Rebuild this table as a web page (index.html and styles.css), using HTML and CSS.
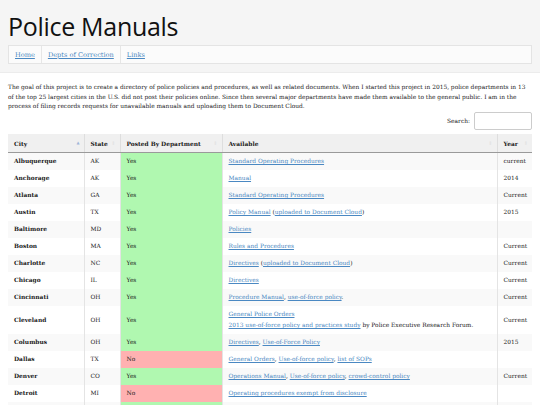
FILE: index.html
```html
<!DOCTYPE html>
<html>
<head>
<meta charset="utf-8">
<link rel="stylesheet" href="styles.css">
</head>
<body>
<header class="masthead">
  <h1 class="title">Police Manuals</h1>
  <nav class="nav">
    <a href="#">Home</a>
    <a href="#">Depts of Correction</a>
    <a href="#">Links</a>
  </nav>
</header>
<main class="content">
  <p class="intro">The goal of this project is to create a directory of police policies and procedures, as well as related documents. When I started this project in 2015, police departments in 13 of the top 25 largest cities in the U.S. did not post their policies online. Since then several major departments have made them available to the general public. I am in the process of filing records requests for unavailable manuals and uploading them to Document Cloud.</p>
  <div class="search"><label>Search:</label><span class="search-box"></span></div>
  <table class="data">
    <colgroup>
      <col class="c-city"><col class="c-state"><col class="c-posted"><col class="c-avail"><col class="c-year">
    </colgroup>
    <thead>
      <tr>
        <th>City<span class="sort asc">▲</span></th>
        <th>State<span class="sort">⇕</span></th>
        <th>Posted By Department<span class="sort">⇕</span></th>
        <th>Available<span class="sort">⇕</span></th>
        <th>Year<span class="sort">⇕</span></th>
      </tr>
    </thead>
    <tbody>
      <tr class="odd"><td class="city">Albuquerque</td><td>AK</td><td class="yes">Yes</td><td><a href="#">Standard Operating Procedures</a></td><td>current</td></tr>
      <tr><td class="city">Anchorage</td><td>AK</td><td class="yes">Yes</td><td><a href="#">Manual</a></td><td>2014</td></tr>
      <tr class="odd"><td class="city">Atlanta</td><td>GA</td><td class="yes">Yes</td><td><a href="#">Standard Operating Procedures</a></td><td>Current</td></tr>
      <tr><td class="city">Austin</td><td>TX</td><td class="yes">Yes</td><td><a href="#">Policy Manual</a> (<a href="#">uploaded to Document Cloud</a>)</td><td>2015</td></tr>
      <tr class="odd"><td class="city">Baltimore</td><td>MD</td><td class="yes">Yes</td><td><a href="#">Policies</a></td><td></td></tr>
      <tr><td class="city">Boston</td><td>MA</td><td class="yes">Yes</td><td><a href="#">Rules and Procedures</a></td><td>Current</td></tr>
      <tr class="odd"><td class="city">Charlotte</td><td>NC</td><td class="yes">Yes</td><td><a href="#">Directives</a> (<a href="#">uploaded to Document Cloud</a>)</td><td>Current</td></tr>
      <tr><td class="city">Chicago</td><td>IL</td><td class="yes">Yes</td><td><a href="#">Directives</a></td><td>Current</td></tr>
      <tr class="odd"><td class="city">Cincinnati</td><td>OH</td><td class="yes">Yes</td><td><a href="#">Procedure Manual</a>, <a href="#">use-of-force policy</a>.</td><td>Current</td></tr>
      <tr><td class="city">Cleveland</td><td>OH</td><td class="yes">Yes</td><td><a href="#">General Police Orders</a><br><a href="#">2013 use-of-force policy and practices study</a> by Police Executive Research Forum.</td><td>Current</td></tr>
      <tr class="odd"><td class="city">Columbus</td><td>OH</td><td class="yes">Yes</td><td><a href="#">Directives</a>, <a href="#">Use-of-Force Policy</a></td><td>2015</td></tr>
      <tr><td class="city">Dallas</td><td>TX</td><td class="no">No</td><td><a href="#">General Orders</a>, <a href="#">Use-of-force policy</a>, <a href="#">list of SOPs</a></td><td></td></tr>
      <tr class="odd"><td class="city">Denver</td><td>CO</td><td class="yes">Yes</td><td><a href="#">Operations Manual</a>, <a href="#">Use-of-force policy</a>, <a href="#">crowd-control policy</a></td><td>Current</td></tr>
      <tr><td class="city">Detroit</td><td>MI</td><td class="no">No</td><td><a href="#">Operating procedures exempt from disclosure</a></td><td></td></tr>
      <tr class="odd"><td class="city">El Paso</td><td>TX</td><td class="yes">Yes</td><td><a href="#">Policies</a></td><td></td></tr>
    </tbody>
  </table>
</main>
</body>
</html>
```

FILE: styles.css
```css
html, body {
  margin: 0;
  padding: 0;
  background: #fff;
  font-family: "DejaVu Serif", Georgia, serif;
  color: #1a1a1a;
}
.masthead {
  background: #f5f5f5;
  padding: 10px 8px 8px;
  border-bottom: 1px solid #ececec;
}
.title {
  font-family: "Open Sans", sans-serif;
  font-weight: 400;
  font-size: 25px;
  letter-spacing: -0.3px;
  line-height: 32px;
  margin: 0 0 3px 0;
  color: #111;
}
.nav {
  display: flex;
  background: #fbfbfb;
  border: 1px solid #e4e4e4;
  height: 17px;
  align-items: stretch;
}
.nav a {
  display: flex;
  align-items: center;
  padding: 0 6px;
  border-right: 1px solid #e6e6e6;
  font-size: 6.6px;
  color: #4a88c2;
}
.nav a:last-child { border-right: none; }
.content {
  padding: 0 8px;
}
.intro {
  font-size: 5.9px;
  line-height: 9.7px;
  margin: 10px 0 0 0;
}
.search {
  display: flex;
  justify-content: flex-end;
  align-items: center;
  gap: 4px;
  margin-top: 0;
  font-size: 5.9px;
}
.search-box {
  width: 56px;
  height: 16px;
  border: 1px solid #ccc;
  border-radius: 2px;
  background: #fff;
}
.data {
  width: 100%;
  table-layout: fixed;
  border-collapse: collapse;
  margin-top: 4px;
  font-size: 5.9px;
}
.c-city { width: 76px; }
.c-state { width: 36px; }
.c-posted { width: 102px; }
.c-year { width: 35px; }
.data th {
  background: #f0f0f0;
  font-weight: 700;
  text-align: left;
  padding: 0 12px 0 6px;
  height: 18px;
  border-right: 1px solid #dedede;
  border-bottom: 1px solid #9a9a9a;
  position: relative;
  white-space: nowrap;
}
.data th:last-child { border-right: none; }
.sort {
  position: absolute;
  right: 4px;
  top: 6px;
  font-size: 5px;
  color: #ddd;
  font-weight: 400;
}
.sort.asc { color: #9fb6d8; font-size: 4px; top: 6px; }
.data td {
  padding: 3px 6px;
  line-height: 11px;
  border-right: 1px solid #e4e4e4;
  vertical-align: middle;
  white-space: nowrap;
  overflow: hidden;
}
.data td:last-child { border-right: none; }
.data tr.odd td { background: #f9f9f9; }
.data td.city { font-weight: 700; padding-top: 2px; padding-bottom: 4px; }
.data tr td.yes { background: #b0f8b0; }
.data tr td.no { background: #ffb1b1; }
.data a { color: #4a88c2; }
```
